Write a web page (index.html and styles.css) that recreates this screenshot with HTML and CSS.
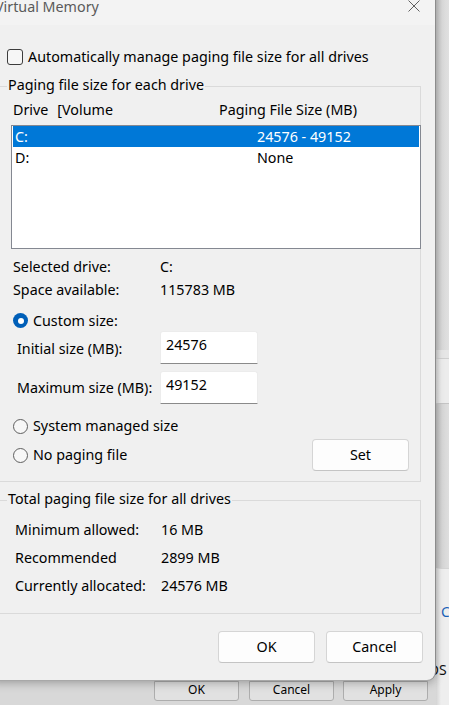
FILE: index.html
```html
<!DOCTYPE html>
<html>
<head>
<meta charset="utf-8">
<title>Virtual Memory</title>
<link rel="stylesheet" href="styles.css">
</head>
<body>
<div class="desktop">
  <div class="back-strip">
    <div class="band band-a"></div>
    <div class="band band-b"></div>
    <div class="band band-c"></div>
    <div class="band band-d"></div>
    <div class="band band-e"></div>
  </div>
  <span class="back-text back-c">C</span>
  <span class="back-text back-os">OS</span>
  <div class="back-footer">
    <button class="back-btn">OK</button>
    <button class="back-btn">Cancel</button>
    <button class="back-btn back-apply">Apply</button>
  </div>

  <div class="dialog">
    <div class="titlebar">
      <span class="title">Virtual Memory</span>
      <svg class="close" width="12" height="12" viewBox="0 0 12 12" aria-label="Close">
        <path d="M0.5 0.5 L11.5 11.5 M11.5 0.5 L0.5 11.5" stroke="#606060" stroke-width="1" fill="none"/>
      </svg>
    </div>
    <div class="content">
      <div class="auto-row"><span class="checkbox"></span><span>Automatically manage paging file size for all drives</span></div>

      <div class="group group-drives">
        <div class="group-title">Paging file size for each drive</div>
        <div class="col-head"><span>Drive<span class="vol">[Volume</span></span><span>Paging File Size (MB)</span></div>
        <div class="listbox">
          <div class="lrow selected"><span>C:</span><span>24576 - 49152</span></div>
          <div class="lrow"><span>D:</span><span>None</span></div>
        </div>
        <div class="info">
          <span>Selected drive:</span><span>C:</span>
          <span>Space available:</span><span>115783 MB</span>
        </div>
        <div class="radio-row custom"><span class="radio checked"></span><span>Custom size:</span></div>
        <div class="size-row initial"><span class="size-label">Initial size (MB):</span><input class="size-input" type="text" value="24576"></div>
        <div class="size-row maximum"><span class="size-label">Maximum size (MB):</span><input class="size-input" type="text" value="49152"></div>
        <div class="radio-row system"><span class="radio"></span><span>System managed size</span></div>
        <div class="radio-row nopage"><span class="radio"></span><span>No paging file</span><button class="btn set">Set</button></div>
      </div>

      <div class="group group-total">
        <div class="group-title">Total paging file size for all drives</div>
        <div class="totals">
          <span>Minimum allowed:</span><span>16 MB</span>
          <span>Recommended</span><span>2899 MB</span>
          <span>Currently allocated:</span><span>24576 MB</span>
        </div>
      </div>

      <div class="actions">
        <button class="btn">OK</button>
        <button class="btn">Cancel</button>
      </div>
    </div>
  </div>
</div>
</body>
</html>
```
FILE: styles.css
```css
* { box-sizing: border-box; }

html, body {
  margin: 0;
  padding: 0;
}

body {
  width: 449px;
  height: 705px;
  overflow: hidden;
  font-family: "Noto Sans", "DejaVu Sans", sans-serif;
  font-size: 14.3px;
  line-height: 20px;
  color: #000;
}

.desktop {
  position: relative;
  width: 449px;
  height: 705px;
  background: #d8d8d8;
  overflow: hidden;
}

/* window behind the dialog */
.back-strip {
  position: absolute;
  left: 436px;
  top: 0;
  width: 13px;
  height: 705px;
  display: flex;
  flex-direction: column;
}
.band-a { height: 350px; background: linear-gradient(to right, #c2c2c2, #d9d9d9 6px, #e0e0e0); }
.band-b { height: 8px; background: linear-gradient(to right, #d0d0d0, #e6e6e6 5px); }
.band-c { height: 45px; border-top: 1px solid #cfcfcf; background: linear-gradient(to right, #d6d6d6, #ececec 5px); }
.band-d { height: 165px; border-top: 1px solid #c4c4c4; background: linear-gradient(to right, #bdbdbd, #d6d6d6 6px, #dedede); }
.band-e { flex: 1; border-top: 1px solid #d4d4d4; background: linear-gradient(to right, #d4d4d4, #eeeeee 5px); }

.back-text {
  position: absolute;
  font-size: 14px;
  line-height: 16px;
}
.back-c { left: 441px; top: 604px; color: #1a62b8; }
.back-os { left: 428px; top: 662px; color: #111; }

.back-footer {
  position: absolute;
  left: 154px;
  top: 681px;
  display: flex;
}
.back-btn {
  width: 85px;
  height: 20px;
  padding: 0 0 3px;
  font-family: inherit;
  font-size: 12px;
  line-height: 16px;
  color: #000;
  background: #e1e1e1;
  border: 1px solid #adadad;
  border-radius: 0 0 3px 3px;
}
.back-btn + .back-btn { margin-left: 10px; }
.back-btn.back-apply { margin-left: 9px; }

/* dialog */
.dialog {
  position: absolute;
  left: -12px;
  top: -14px;
  width: 447px;
  height: 694px;
  background: #f0f0f0;
  border-radius: 8px;
  box-shadow: 1px 0 0 #8c8c8c, 0 1px 0 #a8a8a8, 0 3px 10px rgba(0, 0, 0, 0.28);
  display: flex;
  flex-direction: column;
  z-index: 2;
}

.titlebar {
  height: 39px;
  padding: 3px 15px 0 7px;
  display: flex;
  align-items: center;
  justify-content: space-between;
  background: #f3f3f3;
  border-radius: 8px 8px 0 0;
}
.title {
  color: #5a5a5a;
}
.close { display: block; margin-top: -2px; }

.content {
  padding: 0 12px 17px 9px;
}

.auto-row {
  margin-top: 21px;
  height: 22px;
  padding-left: 10px;
  display: flex;
  align-items: center;
  gap: 5px;
}
.checkbox {
  width: 16px;
  height: 16px;
  border: 1px solid #3c3c3c;
  border-radius: 3px;
  background: #f6f6f6;
  flex: none;
}

.group {
  position: relative;
  margin-right: 2px;
  border: 1px solid #dadada;
}
.group-title {
  position: absolute;
  left: 9px;
  top: -12px;
  padding: 0 1px;
  background: #f0f0f0;
  white-space: nowrap;
}

.group-drives {
  margin-top: 18px;
  padding-bottom: 10px;
}

.col-head {
  margin-top: 13px;
  height: 20px;
  padding-left: 15px;
  display: grid;
  grid-template-columns: 206px 1fr;
}
.vol { margin-left: 9px; }

.listbox {
  margin: 5px -1px 0 13px;
  height: 124px;
  padding: 0 1px;
  background: #fff;
  border: 1px solid #848891;
}
.lrow {
  height: 21px;
  padding: 1px 0 0 2px;
  display: grid;
  grid-template-columns: 242px 1fr;
}
.lrow.selected {
  background: #0078d7;
  color: #fff;
}

.info {
  margin-top: 6px;
  padding-left: 15px;
  display: grid;
  grid-template-columns: 147px 1fr;
  grid-auto-rows: 23px;
  align-items: center;
}

.radio-row {
  padding-left: 15px;
  display: flex;
  align-items: center;
  gap: 5px;
}
.radio {
  width: 15px;
  height: 15px;
  border-radius: 50%;
  border: 1px solid #5f5f5f;
  background: #f7f7f7;
  flex: none;
  display: flex;
  align-items: center;
  justify-content: center;
}
.radio.checked {
  border: none;
  background: #005fb8;
}
.radio.checked::after {
  content: "";
  width: 6px;
  height: 6px;
  border-radius: 50%;
  background: #fff;
}

.custom { margin-top: 9px; height: 21px; }
.system { margin-top: 11px; height: 22px; }
.nopage { margin-top: 2px; height: 32px; }

.size-row {
  height: 33px;
  padding-left: 19px;
  display: flex;
  align-items: center;
}
.size-row.maximum { margin-top: 7px; }
.size-label { width: 143px; flex: none; }
.size-row.initial .size-label { margin-top: 3px; }
.size-input {
  width: 98px;
  height: 33px;
  margin: 0;
  padding: 2px 5px 9px;
  font-family: inherit;
  font-size: 14.3px;
  line-height: 20px;
  color: #000;
  background: #fff;
  border: 1px solid #ececec;
  border-bottom-color: #8a8a8a;
  border-radius: 3px 3px 0 0;
  outline: none;
}

.btn {
  width: 97px;
  height: 32px;
  padding: 0;
  font-family: inherit;
  font-size: 14.3px;
  line-height: 20px;
  color: #000;
  background: #fdfdfd;
  border: 1px solid #d5d5d5;
  border-bottom-color: #c4c4c4;
  border-radius: 4px;
}
.btn.set {
  margin-left: auto;
  margin-right: 11px;
}

.group-total {
  margin-top: 18px;
}
.totals {
  padding: 15px 0 13px 17px;
  display: grid;
  grid-template-columns: 146px 1fr;
  grid-auto-rows: 28px;
  align-items: center;
}

.actions {
  margin-top: 17px;
  display: flex;
  justify-content: flex-end;
  gap: 11px;
}
```
